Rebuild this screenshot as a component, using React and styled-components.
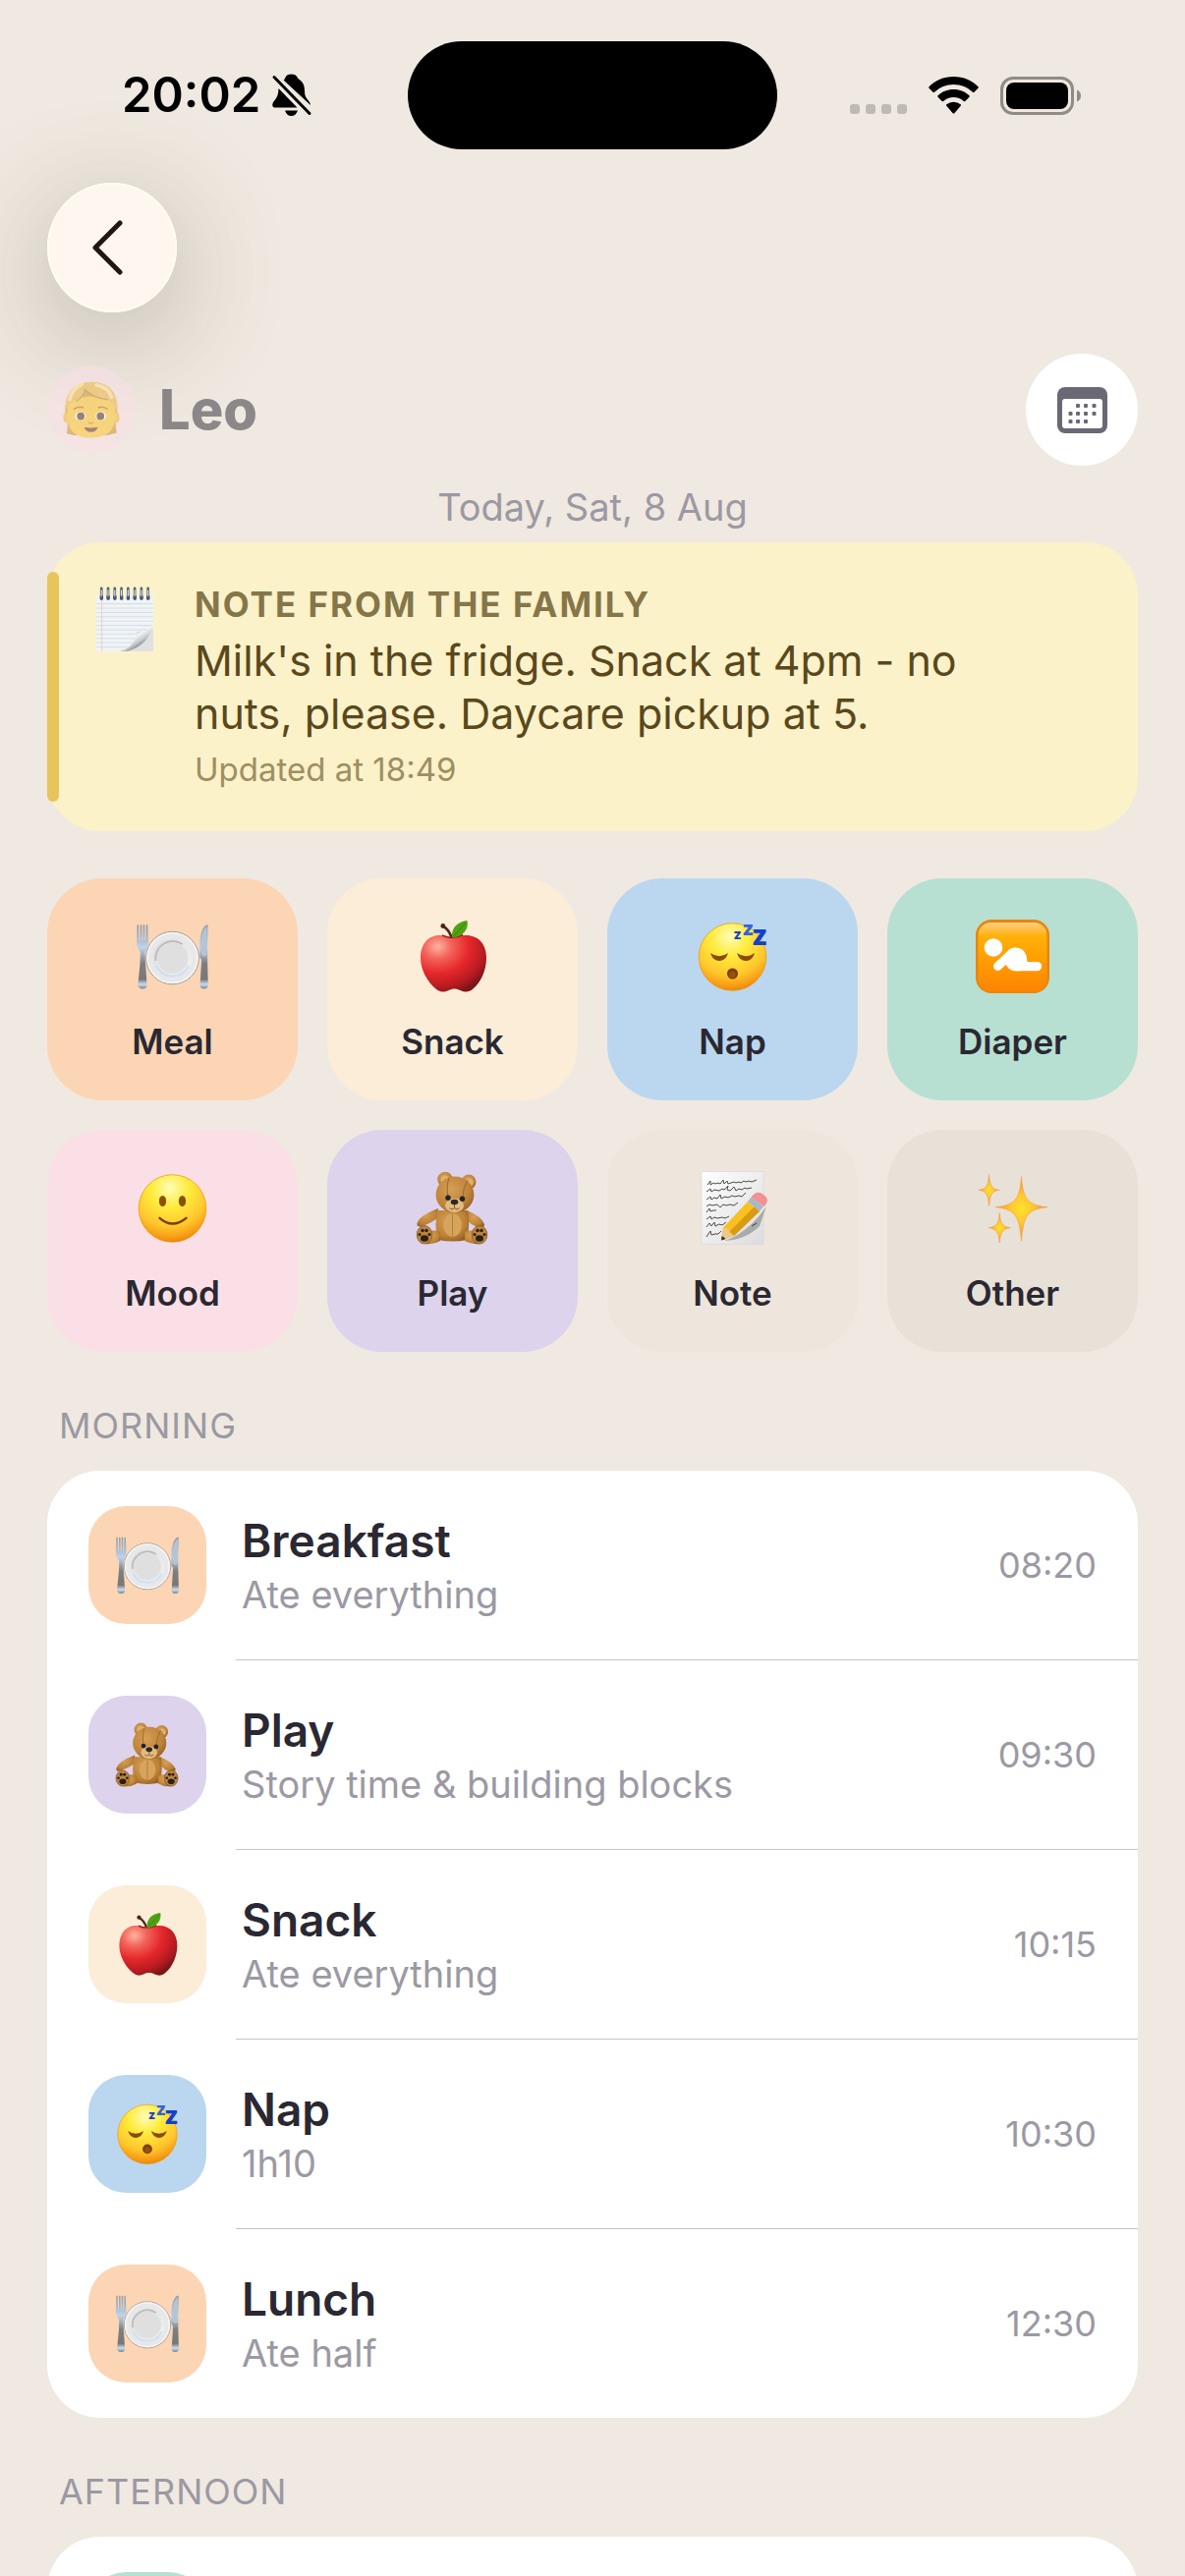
import React, { useId } from 'react';
import styled, { createGlobalStyle } from 'styled-components';

const colors = {
  page: '#f0e9e1',
  ink: '#2a2832',
  muted: '#9b99a3',
  meal: '#fcd5b5',
  snack: '#fbedd8',
  nap: '#bbd7ef',
  diaper: '#b8e0d2',
  mood: '#fae0e6',
  play: '#ddd3ed',
  note: '#eee6dc',
  other: '#e8e1d7',
};

const GlobalStyle = createGlobalStyle`
  * {
    box-sizing: border-box;
  }

  body {
    margin: 0;
    background: ${colors.page};
    color: ${colors.ink};
    font-family: Inter, 'Liberation Sans', sans-serif;
  }

  button {
    border: 0;
    padding: 0;
    color: inherit;
    font: inherit;
    cursor: pointer;
  }

  h1, h2, h3, p, ul {
    margin: 0;
    padding: 0;
  }

  svg {
    display: block;
    flex: none;
    overflow: visible;
  }
`;

const Screen = styled.div`
  height: 100vh;
  overflow: hidden;
`;

const StatusBar = styled.div`
  display: grid;
  grid-template-columns: 1fr 376px 1fr;
  align-items: center;
  padding-top: 42px;
  color: #000;
`;

const Island = styled.div`
  height: 110px;
  border-radius: 55px;
  background: #000;
`;

const StatusLeft = styled.div`
  display: flex;
  align-items: center;
  gap: 12px;
  padding-left: 124px;
  font-size: 49px;
  font-weight: 600;
  line-height: 60px;
`;

const StatusRight = styled.div`
  display: flex;
  align-items: center;
  justify-content: flex-end;
  gap: 22px;
  padding-right: 106px;
`;

const Content = styled.main`
  padding: 34px 48px 0;
`;

const RoundButton = styled.button`
  display: flex;
  align-items: center;
  justify-content: center;
  width: ${({ $size }) => $size}px;
  height: ${({ $size }) => $size}px;
  border-radius: 50%;
  background: #fff;
`;

const BackButton = styled(RoundButton)`
  background: #fef6ef;
  box-shadow: inset 0 0 0 2px #fffdf0, 0 24px 110px 4px rgba(80, 84, 60, 0.32);
`;

const ChildHeader = styled.header`
  display: flex;
  align-items: center;
  justify-content: space-between;
  margin-top: 42px;
`;

const Child = styled.div`
  display: flex;
  align-items: center;
  gap: 24px;
  opacity: 0.5;
`;

const Avatar = styled.div`
  display: flex;
  align-items: center;
  justify-content: center;
  width: 90px;
  height: 90px;
  border-radius: 50%;
  background: #fae0e6;
`;

const ChildName = styled.h1`
  font-size: 56px;
  font-weight: 800;
  line-height: 66px;
`;

const DateLine = styled.p`
  margin: 18px 0 12px;
  color: ${colors.muted};
  font-size: 38px;
  line-height: 48px;
  text-align: center;
`;

const NoteCard = styled.section`
  position: relative;
  display: flex;
  gap: 38px;
  padding: 42px 46px;
  border-radius: 54px;
  background: #fcf2c9;

  &::before {
    content: '';
    position: absolute;
    top: 30px;
    bottom: 30px;
    left: 0;
    width: 12px;
    border-radius: 6px;
    background: #e8c55c;
  }
`;

const NoteEmoji = styled.div`
  display: flex;
  align-items: center;
  height: 72px;
`;

const NoteText = styled.div`
  display: flex;
  flex-direction: column;
  gap: 9px;
`;

const NoteTitle = styled.h2`
  color: #85764a;
  font-size: 35px;
  font-weight: 700;
  line-height: 42px;
  letter-spacing: 2px;
  text-transform: uppercase;
`;

const NoteBody = styled.p`
  max-width: 820px;
  color: #5a481c;
  font-size: 43px;
  line-height: 54px;
`;

const NoteMeta = styled.p`
  color: #9c8f62;
  font-size: 33px;
  line-height: 42px;
`;

const TileGrid = styled.div`
  display: grid;
  grid-template-columns: repeat(4, 1fr);
  gap: 30px;
  margin-top: 48px;
`;

const Tile = styled.button`
  display: flex;
  flex-direction: column;
  align-items: center;
  gap: 28px;
  padding: 42px 0 39px;
  border-radius: 56px;
  background: ${({ $tone }) => colors[$tone]};
  font-size: 35px;
  font-weight: 600;
  line-height: 42px;
`;

const Section = styled.section`
  margin-top: 54px;
`;

const SectionTitle = styled.h2`
  margin: 0 12px 25px;
  color: ${colors.muted};
  font-size: 36px;
  font-weight: 400;
  line-height: 42px;
  letter-spacing: 1px;
  text-transform: uppercase;
`;

const List = styled.ul`
  border-radius: 54px;
  background: #fff;
  list-style: none;
`;

const Item = styled.li`
  & + &::before {
    content: '';
    display: block;
    height: 1px;
    margin-left: 192px;
    background: #c6c6c8;
  }
`;

const Row = styled.div`
  display: flex;
  align-items: center;
  gap: 36px;
  padding: 36px 42px;
`;

const IconBox = styled.div`
  display: flex;
  align-items: center;
  justify-content: center;
  width: 120px;
  height: 120px;
  border-radius: 38px;
  background: ${({ $tone }) => colors[$tone]};
`;

const RowText = styled.div`
  flex: 1;
`;

const RowTitle = styled.h3`
  font-size: 46px;
  font-weight: 600;
  line-height: 60px;
`;

const RowDetail = styled.p`
  color: ${colors.muted};
  font-size: 38px;
  line-height: 50px;
`;

const RowTime = styled.time`
  color: ${colors.muted};
  font-size: 36px;
  line-height: 42px;
`;

const Picture = ({ size, children }) => (
  <svg width={size} height={size} viewBox="0 0 75 75" aria-hidden="true">
    {children}
  </svg>
);

const MealIcon = ({ size }) => {
  const id = useId();
  return (
    <Picture size={size}>
      <defs>
        <linearGradient id={`${id}m`} x1="0" y1="0" x2="0" y2="1">
          <stop offset="0" stopColor="#8c97a3" />
          <stop offset=".36" stopColor="#bfd3ea" />
          <stop offset=".6" stopColor="#7d7f82" />
          <stop offset=".85" stopColor="#777" />
          <stop offset=".93" stopColor="#c9dcf0" />
          <stop offset="1" stopColor="#7a8591" />
        </linearGradient>
        <linearGradient id={`${id}p`} x1="0" y1="0" x2="1" y2="1">
          <stop offset="0" stopColor="#dcdcdc" />
          <stop offset="1" stopColor="#f1f3f5" />
        </linearGradient>
      </defs>
      <path
        d="M1.5 6q1-2 1.5 0l.6 15h.8L4.7 6q.9-2 1.6 0l.3 15h.8L7.700 6q.8-2 1.600 0l.2 15h.8L10.800 6q.9-2 1.500 0l.8 19q-1 5-3.500 8l.4 12 1.600 22q-.4 3.500-4.300 3.500T2.300 67L4.500 45l.3-12Q1.800 30 1.100 25z"
        fill={`url(#${id}m)`}
      />
      <path
        d="M73.500 5.200q-7.500 1-8.500 22v9q0 3 2.200 4.500L65.500 67q.3 3.500 4.200 3.500t4.100-3.500l-.7-27z"
        fill={`url(#${id}m)`}
      />
      <path d="M72.500 7q-5.500 3-6 20v8q3 4 6 1z" fill="#b4c4d4" />
      <circle cx="37.500" cy="39" r="26.800" fill="#e8e8e8" stroke="#8e8e8e" strokeWidth=".8" />
      <circle cx="37.500" cy="39" r="25.400" fill="none" stroke="#f8f8f8" strokeWidth="1.400" />
      <circle cx="37.500" cy="39.500" r="18" fill="none" stroke={`url(#${id}p)`} strokeWidth="3.500" />
      <path d="M21 47a18 18 0 0 0 33 0" fill="none" stroke="#cfe0f4" strokeWidth="2.600" />
      <path d="M20.500 42a17.500 17.500 0 0 1 27-17" fill="none" stroke="#bcbcbc" strokeWidth="2" />
      <circle cx="37.500" cy="39" r="15.500" fill="#dfdfdf" />
    </Picture>
  );
};

const AppleIcon = ({ size }) => {
  const id = useId();
  return (
    <Picture size={size}>
      <defs>
        <radialGradient id={id} cx=".26" cy=".2" r=".86">
          <stop offset="0" stopColor="#ffb3a2" />
          <stop offset=".25" stopColor="#f3635a" />
          <stop offset=".55" stopColor="#e6282b" />
          <stop offset=".85" stopColor="#b31a20" />
          <stop offset="1" stopColor="#7c1518" />
        </radialGradient>
      </defs>
      <path
        d="M37 19c5-2.500 9-3 14-3 13 0 21 9 21 23 0 13-6 25-13 31-5 4.500-9 4-13 2.200-5-2.200-8-2.200-13 0-4.500 2-9 1.800-13-2.200C12 63 5 51 5 39c0-14 8-23 19-23 5 0 9 1 13 3z"
        fill={`url(#${id})`}
      />
      <path d="M27 16q10 5 21-.5" fill="none" stroke="#a51b1c" strokeWidth="1.500" />
      <path d="M27.500 6.500q6 3 9 11.500" fill="none" stroke="#54281c" strokeWidth="2.600" />
      <circle cx="27.800" cy="6.500" r="2.400" fill="#4a2218" />
      <path d="M37 18.500C36 8 43 2 52.600 1 54 10 49 17 37 18.500z" fill="#4fa313" />
      <path d="M38 17.500Q44 12 51 3" fill="none" stroke="#3a850c" strokeWidth="1" />
    </Picture>
  );
};

const FaceBase = ({ id }) => (
  <>
    <defs>
      <radialGradient id={id} cx=".46" cy=".2" r=".82">
        <stop offset="0" stopColor="#fffcb8" />
        <stop offset=".34" stopColor="#ffec3d" />
        <stop offset=".7" stopColor="#fec62c" />
        <stop offset=".9" stopColor="#f79a14" />
        <stop offset="1" stopColor="#e07f10" />
      </radialGradient>
    </defs>
    <circle cx="37.500" cy="38" r="34.300" fill={`url(#${id})`} stroke="#ee9a10" strokeWidth=".8" />
  </>
);

const NapIcon = ({ size }) => (
  <Picture size={size}>
    <FaceBase id={useId()} />
    <path d="M15 34q9 6.500 18 0-2.500 8-9 8t-9-8zM42 34q9 6.500 18 0-2.500 8-9 8t-9-8z" fill="#8a4b00" />
    <circle cx="37.500" cy="55" r="5.500" fill="#7a3d00" />
    <circle cx="37.500" cy="56" r="3.400" fill="#955307" />
    <g fill="#1440c8" fontFamily="Inter, sans-serif" fontWeight="800">
      <text x="38.500" y="20" fontSize="14">z</text>
      <text x="47.500" y="15.500" fontSize="20" fill="#2f62e0">z</text>
      <text x="57" y="26" fontSize="28">z</text>
    </g>
  </Picture>
);

const MoodIcon = ({ size }) => (
  <Picture size={size}>
    <FaceBase id={useId()} />
    <ellipse cx="27.500" cy="30.500" rx="3.600" ry="5.500" fill="#8a5200" />
    <ellipse cx="47.500" cy="30.500" rx="3.600" ry="5.500" fill="#8a5200" />
    <path d="M24.500 47.800q13 11.500 27 0" fill="none" stroke="#7a3d00" strokeWidth="2.300" strokeLinecap="round" />
  </Picture>
);

const DiaperIcon = ({ size }) => {
  const id = useId();
  return (
    <Picture size={size}>
      <defs>
        <linearGradient id={id} x1="0" y1="0" x2="0" y2="1">
          <stop offset="0" stopColor="#ffce82" />
          <stop offset=".2" stopColor="#ffb10a" />
          <stop offset=".55" stopColor="#ff9d00" />
          <stop offset="1" stopColor="#ff8400" />
        </linearGradient>
      </defs>
      <rect width="75" height="75" rx="16" fill="#e8860d" />
      <rect x="2.500" y="3" width="70" height="70" rx="13" fill={`url(#${id})`} />
      <g fill="#fff" stroke="#fff">
        <circle cx="18" cy="28.500" r="9.300" stroke="none" />
        <path d="M22.500 47.500 37 34" strokeWidth="9" strokeLinecap="round" />
        <path d="M29 38q4-9.500 11-9.500 12 0 12.300 14.500L46 52.300h-6q-5.500 0-9-6z" stroke="none" />
        <path d="M40 47.600h22.500" strokeWidth="9.300" strokeLinecap="round" />
      </g>
    </Picture>
  );
};

const PlayIcon = ({ size }) => {
  const id = useId();
  return (
    <Picture size={size}>
      <defs>
        <radialGradient id={id} cx=".4" cy=".35" r=".75">
          <stop offset="0" stopColor="#d6a054" />
          <stop offset=".65" stopColor="#bd8238" />
          <stop offset="1" stopColor="#8f5a20" />
        </radialGradient>
      </defs>
      <g fill={`url(#${id})`}>
        <path d="M23 38Q4 45 1.500 53q-.5 4 3.500 3.500Q16 53 22 48z" />
        <path d="M52 40q15 6 18 14 0 5-5 4-9-3-13-9z" />
        <path d="M23 40h30q3 12-1 30-14 3-29 0-5-16 0-30z" />
        <circle cx="30" cy="8.500" r="7.800" />
        <circle cx="54" cy="11" r="7.500" />
        <path d="M10 62q10-3 15 0v9q-7 4-15 3z" />
        <path d="M65 62q-10-3-15 0v9q7 4 15 3z" />
      </g>
      <circle cx="30" cy="9" r="4.500" fill="#ddb271" />
      <circle cx="54.500" cy="11.500" r="4.200" fill="#ddb271" />
      <ellipse cx="40" cy="24" rx="19.400" ry="18.500" fill={`url(#${id})`} />
      <path d="M34 7q-3 8-1 19M53 9q-5 8-5 18" fill="none" stroke="#936128" strokeWidth=".9" />
      <ellipse cx="39.500" cy="35" rx="9.500" ry="7.200" fill="#e2bb80" />
      <path d="M39.500 33v4.500m-5 .2q2.500 2.600 5 0 2.500 2.600 5 0" fill="none" stroke="#7c4b23" strokeWidth=".9" />
      <ellipse cx="39.500" cy="31.500" rx="3.800" ry="2.800" fill="#2b2928" />
      <circle cx="33" cy="27.300" r="2.700" fill="#20242c" />
      <circle cx="47.500" cy="28.300" r="2.700" fill="#20242c" />
      <ellipse cx="37.500" cy="55" rx="9.400" ry="11.800" fill="#d6a45d" />
      <path d="M37.500 43.500v23" stroke="#a9742f" strokeWidth=".8" />
      {[9, 65].map((x) => (
        <g key={x}>
          <ellipse cx={x} cy="64.800" rx="7.800" ry="9.200" fill="#bb8440" stroke="#8c5c24" strokeWidth=".9" />
          <ellipse cx={x} cy="68.500" rx="4" ry="3.200" fill="#2a2014" />
          <circle cx={x - 5} cy="64.500" r="1.500" fill="#2a2014" />
          <circle cx={x - 2} cy="60.500" r="1.700" fill="#2a2014" />
          <circle cx={x + 2} cy="60.500" r="1.700" fill="#2a2014" />
          <circle cx={x + 5} cy="64.500" r="1.500" fill="#2a2014" />
        </g>
      ))}
    </Picture>
  );
};

const NoteIcon = ({ size }) => {
  const id = useId();
  return (
    <Picture size={size}>
      <defs>
        <linearGradient id={id} x1="0" y1="0" x2="1" y2="1">
          <stop offset="0" stopColor="#ffffff" />
          <stop offset="1" stopColor="#dcdcde" />
        </linearGradient>
      </defs>
      <rect x="6" y=".5" width="63" height="74" fill={`url(#${id})`} stroke="#d5d5d5" strokeWidth=".6" />
      <g fill="none" stroke="#4b4b4b" strokeWidth="1" strokeLinejoin="round">
        <path d="M12 14l3-4 0 4 3-2 2 1 3-1 2 1 3-4 1 4 3-3 1 3 6-2 2 1 3-1 2 1 3-2 2 1 3-1 3 1 5-2" />
        <path d="M11 21l4-3 1 3 3-2 5 1 3-2 2 1 4-4-1 4 3 1 4-4 2 4 3-2 3 1 3-2 2 1 5-1" />
        <path d="M11 29l4-3 1 3 3-2 3 1 3-4 1 4 4-2 3 1 4-2 3 1 4-1 3 1 4-4" />
        <path d="M11 36l3-2 3 1 5-1 3 3 3-3 3 1 4-1 4 1 4-3" />
        <path d="M11 42l3-4 1 3 3-1 3 0" />
        <path d="M11 49l4-3 1 3 3-2 3 1 5-1 3 1 4-2" />
        <path d="M11 57l3-4 2 3 3-4 1 4 4-2 3 1 4-3M57 56l5-3" />
        <path d="M11 67l4-6 1 4 4-1 3 0 3-3" />
      </g>
      <path d="M29 71Q52 64 72 36l-7 20q-14 14-36 15z" fill="#000" opacity=".25" />
      <path d="M26 70.500 28 57.500 53 31l12 10-26 25z" fill="#f9c01f" />
      <path d="M34 62 60 36l5 5-26 25z" fill="#d99a16" />
      <path d="M26 70.500 28 58l5 .5 2 4 4 3.500z" fill="#edc888" />
      <path d="M26 70.500l.7-4.500 4 3z" fill="#2e2e33" />
      <path d="M53 31l3.500-4.500L69 36l-4 5z" fill="#a9b7c6" />
      <path d="M56.500 26.500q6-8 12.500-2.500 7.500 5 .5 12z" fill="#f29093" />
    </Picture>
  );
};

const OtherIcon = ({ size }) => {
  const id = useId();
  return (
    <Picture size={size}>
      <defs>
        <radialGradient id={id}>
          <stop offset="0" stopColor="#ffe02e" />
          <stop offset=".45" stopColor="#fdc72f" />
          <stop offset="1" stopColor="#f5862f" />
        </radialGradient>
      </defs>
      <g fill={`url(#${id})`} stroke="#f7a44c" strokeWidth=".7" strokeLinejoin="round">
        <path d="M46.500 5.500C48 27 52 35 73 36.700 52 38.500 48.500 47 46.500 71 44.500 47 41 38.500 20 36.700 41 35 45 27 46.500 5.500z" />
        <path d="M13.600 3.500c.8 11 2.400 14.800 10.500 15.800-8.100 1.300-9.700 5-10.500 16.200-.8-11.200-2.400-14.900-10.500-16.200 8.100-1 9.700-4.800 10.500-15.800z" />
        <path d="M24.300 42.500c.8 10.500 2.600 14 11 15.200-8.400 1.300-10.200 5-11 15.300-.8-10.300-2.600-14-11-15.300 8.400-1.200 10.200-4.700 11-15.200z" />
      </g>
    </Picture>
  );
};

const NotepadIcon = ({ size }) => {
  const id = useId();
  return (
    <Picture size={size}>
      <defs>
        <linearGradient id={id} x1=".3" y1=".3" x2=".7" y2=".8">
          <stop offset="0" stopColor="#8f9194" />
          <stop offset=".35" stopColor="#f4f5f6" />
          <stop offset=".7" stopColor="#c4c6c8" />
          <stop offset="1" stopColor="#6f7174" />
        </linearGradient>
      </defs>
      <path d="M4.500 10.500h66V75h-66z" fill="#f1f3f5" />
      <path d="M4.500 20h66M4.500 25h66M4.500 30h66M4.500 35h66M4.500 40h66M4.500 45h66M4.500 50h60M4.500 55h50M4.500 60h46M4.500 65h42M4.500 70h36" stroke="#cbd9e7" strokeWidth=".9" />
      <path d="M11 13v62" stroke="#f0c4c6" strokeWidth=".9" />
      <path d="M38 75Q60 66 70.500 48v27z" fill="#dfe0e2" />
      <path d="M30 75q18-3 22-23 13 1 18.500-8-5 23-30 31z" fill={`url(#${id})`} />
      {[10.500, 18.200, 25.900, 33.600, 41.300, 49, 56.700, 64.400].map((x) => (
        <g key={x}>
          <rect x={x - 1.800} y="10" width="3.800" height="5.500" rx="1.500" fill="#3a3d44" />
          <path d={`M${x} 13V2`} stroke="#52617a" strokeWidth="3" strokeLinecap="round" />
          <path d={`M${x} 11V4`} stroke="#d3dfea" strokeWidth="1.300" />
        </g>
      ))}
    </Picture>
  );
};

const ChildFace = ({ size }) => (
  <Picture size={size}>
    <path d="M5 69Q8 55 3 42 2 2 38 1q35 1 33 41-3 14 0 26l-12 3H14z" fill="#d08a1e" />
    <ellipse cx="4" cy="48" rx="3.500" ry="6.500" fill="#f7b321" />
    <ellipse cx="71" cy="48" rx="3.500" ry="6.500" fill="#f7b321" />
    <path d="M6 34q6-14 31.500-14T69 34v16q-3 24-31.500 24.500T6 50z" fill="#ffc21f" />
    <path d="M3 42Q1 2 38 1q36 1 34 41-4-13-13-18-18-1-30-13-1 9-12 16 2-4 2-6Q6 28 3 42z" fill="#efb232" />
    <path d="M25 4q-14 7-16 20M44 5q16 3 20 16" fill="none" stroke="#ffe08a" strokeWidth="5" strokeLinecap="round" />
    <path d="M17 27q11-7 12-16 12 12 30 13" fill="none" stroke="#b0701a" strokeWidth="1.500" />
    <g fill="#fff">
      <ellipse cx="23" cy="46" rx="7" ry="5.500" />
      <ellipse cx="50" cy="46" rx="7" ry="5.500" />
    </g>
    <circle cx="23.500" cy="46" r="5" fill="#3d1f0c" />
    <circle cx="49.500" cy="46" r="5" fill="#3d1f0c" />
    <path d="M14 37q7-5 13-2M46 35q7-3 13 2" fill="none" stroke="#a06410" strokeWidth="2" />
    <path d="M33.500 54q3.500 3 7 0" fill="none" stroke="#c97b10" strokeWidth="2" />
    <path d="M28 60.500q9 2 18 0-2 6.500-9 6.500t-9-6.500z" fill="#5f1f12" />
  </Picture>
);

const icons = {
  meal: MealIcon,
  snack: AppleIcon,
  nap: NapIcon,
  diaper: DiaperIcon,
  mood: MoodIcon,
  play: PlayIcon,
  note: NoteIcon,
  other: OtherIcon,
};

const BellOffIcon = () => (
  <svg width="40" height="44" viewBox="0 0 40 44" aria-hidden="true">
    <path
      d="M12 6.500C14 4 13.500 .5 19.500 .5S25 4 27 5.500c6 3.500 6 9 6.200 14.500 0 5 5.800 8 5.800 12L11.500 6.500zM6.500 15 25.500 34.500H2.500Q-.5 34 .5 30.500C1.500 27 6.500 25 6.500 15zM13 37.500h13Q24 43 19.500 43T13 37.500z"
    />
    <path d="M2 3.500l36 37" stroke="#000" strokeWidth="3" strokeLinecap="round" />
  </svg>
);

const SignalDots = () => (
  <svg width="58" height="38" viewBox="0 0 58 38" fill="#c0bab4" aria-hidden="true">
    {[0, 16, 32, 48].map((x) => (
      <rect key={x} x={x} y="28" width="10" height="10" rx="3" />
    ))}
  </svg>
);

const WifiIcon = () => (
  <svg width="51" height="38" viewBox="0 0 51 38" aria-hidden="true">
    <path d="M25.500 0C35.500 0 44.500 4 50.500 10.300q.7.800 0 1.500l-4 4q-.8.700-1.500 0-8-7.800-19.500-7.800T6 15.800q-.7.700-1.500 0l-4-4q-.7-.7 0-1.500C6.500 4 15.500 0 25.500 0z" />
    <path d="M25.500 13c6.500 0 12 2.300 16 6.300q.7.700 0 1.500l-4.200 4.200q-.7.700-1.500 0-4.300-4-10.300-4t-10.300 4q-.8.700-1.500 0l-4.200-4.200q-.7-.8 0-1.500c4-4 9.500-6.300 16-6.300z" />
    <path d="M25.500 25.700q4 0 7.200 2.500.8.700 0 1.600l-6.400 7.400q-.8.800-1.600 0l-6.400-7.400q-.8-.9 0-1.600 3.200-2.500 7.200-2.500z" />
  </svg>
);

const BatteryIcon = () => (
  <svg width="82" height="39" viewBox="0 0 82 39" aria-hidden="true">
    <rect x="1.500" y="1.500" width="72" height="36" rx="11.500" fill="none" stroke="#8f8c87" strokeWidth="3" />
    <rect x="6" y="6" width="63" height="27" rx="8" />
    <path d="M78 13.500q4 1.500 4 6t-4 6z" fill="#8f8c87" />
  </svg>
);

const ChevronIcon = () => (
  <svg width="40" height="60" viewBox="0 0 40 60" aria-hidden="true">
    <path d="M28 5 3 30l25 25" fill="none" stroke="#1f1712" strokeWidth="5" strokeLinecap="round" strokeLinejoin="round" />
  </svg>
);

const calendarDots = [
  [20.5, 21], [28.5, 21], [37, 21],
  [13, 29], [20.5, 29], [28.5, 29], [37, 29],
  [13, 37], [20.5, 37], [28.5, 37],
];

const CalendarIcon = () => (
  <svg width="51" height="47" viewBox="0 0 51 47" fill="#6b6876" aria-hidden="true">
    <rect width="51" height="47" rx="8" />
    <rect x="5" y="12" width="41" height="30" rx="3" fill="#fff" />
    {calendarDots.map(([x, y]) => (
      <rect key={`${x}-${y}`} x={x - 1.5} y={y - 4} width="4" height="4" rx="1" />
    ))}
  </svg>
);

const actions = [
  ['meal', 'Meal'],
  ['snack', 'Snack'],
  ['nap', 'Nap'],
  ['diaper', 'Diaper'],
  ['mood', 'Mood'],
  ['play', 'Play'],
  ['note', 'Note'],
  ['other', 'Other'],
];

const sections = [
  {
    title: 'Morning',
    entries: [
      { tone: 'meal', title: 'Breakfast', detail: 'Ate everything', time: '08:20' },
      { tone: 'play', title: 'Play', detail: 'Story time & building blocks', time: '09:30' },
      { tone: 'snack', title: 'Snack', detail: 'Ate everything', time: '10:15' },
      { tone: 'nap', title: 'Nap', detail: '1h10', time: '10:30' },
      { tone: 'meal', title: 'Lunch', detail: 'Ate half', time: '12:30' },
    ],
  },
  { title: 'Afternoon', entries: [{ tone: 'diaper' }] },
];

const Entry = ({ tone, title, detail, time }) => {
  const Icon = icons[tone];
  return (
    <Item>
      <Row>
        <IconBox $tone={tone}>
          <Icon size={66} />
        </IconBox>
        {title && (
          <RowText>
            <RowTitle>{title}</RowTitle>
            <RowDetail>{detail}</RowDetail>
          </RowText>
        )}
        {time && <RowTime>{time}</RowTime>}
      </Row>
    </Item>
  );
};

export default function App() {
  return (
    <Screen>
      <GlobalStyle />
      <StatusBar>
        <StatusLeft>
          <span>20:02</span>
          <BellOffIcon />
        </StatusLeft>
        <Island />
        <StatusRight>
          <SignalDots />
          <WifiIcon />
          <BatteryIcon />
        </StatusRight>
      </StatusBar>
      <Content>
        <BackButton $size={132} aria-label="Back">
          <ChevronIcon />
        </BackButton>
        <ChildHeader>
          <Child>
            <Avatar>
              <ChildFace size={58} />
            </Avatar>
            <ChildName>Leo</ChildName>
          </Child>
          <RoundButton $size={114} aria-label="Pick a date">
            <CalendarIcon />
          </RoundButton>
        </ChildHeader>
        <DateLine>Today, Sat, 8 Aug</DateLine>
        <NoteCard>
          <NoteEmoji>
            <NotepadIcon size={66} />
          </NoteEmoji>
          <NoteText>
            <NoteTitle>Note from the family</NoteTitle>
            <NoteBody>Milk's in the fridge. Snack at 4pm - no nuts, please. Daycare pickup at 5.</NoteBody>
            <NoteMeta>Updated at 18:49</NoteMeta>
          </NoteText>
        </NoteCard>
        <TileGrid>
          {actions.map(([tone, label]) => {
            const Icon = icons[tone];
            return (
              <Tile key={tone} $tone={tone}>
                <Icon size={75} />
                {label}
              </Tile>
            );
          })}
        </TileGrid>
        {sections.map(({ title, entries }) => (
          <Section key={title}>
            <SectionTitle>{title}</SectionTitle>
            <List>
              {entries.map((entry, i) => (
                <Entry key={i} {...entry} />
              ))}
            </List>
          </Section>
        ))}
      </Content>
    </Screen>
  );
}
